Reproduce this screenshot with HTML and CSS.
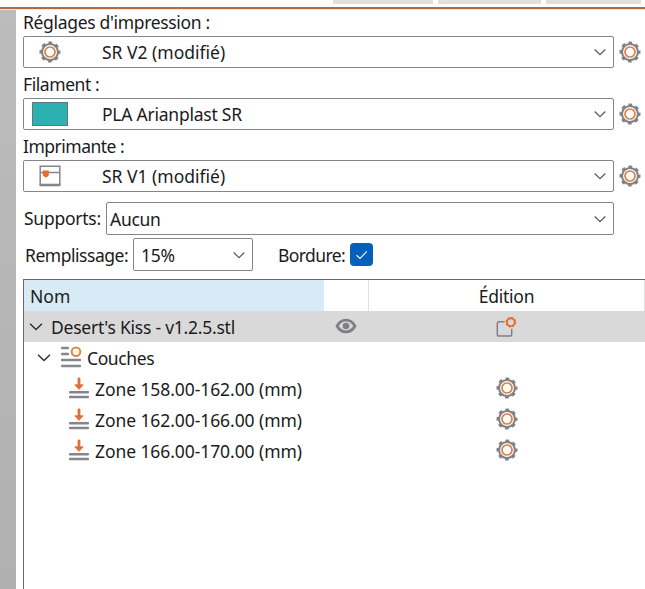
FILE: index.html
```html
<!DOCTYPE html>
<html lang="fr">
<head>
<meta charset="utf-8">
<title>Réglages</title>
<link rel="stylesheet" href="styles.css">
</head>
<body>
<svg class="defs" width="0" height="0">
  <symbol id="gear" viewBox="0 0 22 22">
    <circle cx="11" cy="11" r="9.2" fill="none" stroke="#808184" stroke-width="2.6" stroke-dasharray="3.6 3.626" stroke-dashoffset="1.8"/>
    <circle cx="11" cy="11" r="8" fill="#fffdf8" stroke="#808184" stroke-width="2.1"/>
    <circle cx="11" cy="11" r="5" fill="#fffefa" stroke="#dc7e4c" stroke-width="1.7"/>
  </symbol>
  <symbol id="chev" viewBox="0 0 12 8"><path d="M.7 1.5 6 6.7 11.3 1.5" fill="none" stroke="currentColor" stroke-width="1.2"/></symbol>
  <symbol id="zone" viewBox="0 0 22 22">
    <path d="M11 1.8V9" fill="none" stroke="#e07036" stroke-width="2.8" stroke-linecap="round"/>
    <path d="M6.8 7.8h8.4L11 12.4z" fill="#e07036" stroke="#e07036" stroke-width=".8" stroke-linejoin="round"/>
    <path d="M2.2 15.3h17.6M2.2 20h17.6" stroke="#86868a" stroke-width="2.6" stroke-linecap="round"/>
  </symbol>
</svg>
<header class="tabs"><i></i><i></i><i></i></header>
<div class="app">
  <div class="rail"></div>
  <main>
    <label class="title t1">Réglages d'impression :</label>
    <div class="line"><div class="combo"><span class="pic"><svg class="gear"><use href="#gear"/></svg></span><span class="v1">SR V2 (modifié)</span><svg class="chev"><use href="#chev"/></svg></div><svg class="gear"><use href="#gear"/></svg></div>
    <label class="title t2">Filament :</label>
    <div class="line"><div class="combo"><span class="pic"><b class="swatch"></b></span><span class="v2">PLA Arianplast SR</span><svg class="chev"><use href="#chev"/></svg></div><svg class="gear"><use href="#gear"/></svg></div>
    <label class="title t3">Imprimante :</label>
    <div class="line"><div class="combo"><span class="pic"><svg class="gear" viewBox="0 0 22 22"><path d="M1.2 20V1.2h19.6V20M1 7.5h20" fill="none" stroke="#85858a" stroke-width="1.5"/><path d="M.5 20h21" stroke="#85858a" stroke-width="2.6"/><path d="M3.8 5.5h6v4.8L8 12.2H6L3.8 10.3z" fill="#e56d2b"/></svg></span><span class="v1">SR V1 (modifié)</span><svg class="chev"><use href="#chev"/></svg></div><svg class="gear"><use href="#gear"/></svg></div>
    <div class="supports"><label class="t4">Supports:</label><div class="combo"><span class="v4">Aucun</span><svg class="chev"><use href="#chev"/></svg></div></div>
    <div class="fill"><label class="t5">Remplissage:</label><div class="combo"><span class="v5">15%</span><svg class="chev"><use href="#chev"/></svg></div><label class="t6">Bordure:</label><span class="check"><svg viewBox="0 0 23 23" width="23" height="23"><path d="M6.5 12.2 10 15.5 16.8 8.4" fill="none" stroke="#e8f3ff" stroke-width="1.2"/></svg></span></div>
    <section class="tree">
      <div class="row head"><div class="name"><span class="n0">Nom</span></div><div class="eye"></div><div class="edit"><span class="n1">Édition</span></div></div>
      <div class="row selected"><div class="name"><svg class="arrow"><use href="#chev"/></svg><span class="n2">Desert's Kiss - v1.2.5.stl</span></div><div class="eye"><svg width="22" height="16" viewBox="0 0 22 16"><path d="M2 8C6.2.2 15.8.2 20 8 15.8 15.8 6.2 15.8 2 8z" fill="none" stroke="#808083" stroke-width="2.8" stroke-linejoin="round"/><circle cx="11" cy="8" r="3.3" fill="#808083"/></svg></div><div class="edit"><svg class="gear" viewBox="0 0 22 22"><path d="M8.5 5.7H3.2Q1.3 5.7 1.3 7.6v10.6q0 1.9 1.9 1.9h10.6q1.9 0 1.9-1.9v-5.5" fill="none" stroke="#828286" stroke-width="1.5"/><circle cx="14.8" cy="6.2" r="4.7" fill="none" stroke="#e96b2c" stroke-width="1.3" stroke-dasharray="2 1.691"/><circle cx="14.8" cy="6.2" r="3.9" fill="none" stroke="#e96b2c" stroke-width="1.9"/></svg></div></div>
      <div class="row couches"><div class="name"><svg class="arrow"><use href="#chev"/></svg><svg class="gear" viewBox="0 0 22 22"><path d="M2.2 2h5.6M2.2 8h5.6M2.2 14h17.6M2.2 20h17.6" stroke="#86868d" stroke-width="2.6" stroke-linecap="round"/><circle cx="16" cy="5.8" r="4.3" fill="#fff9ed" stroke="#d78b42" stroke-width="2"/></svg><span class="n3">Couches</span></div></div>
      <div class="row zone"><div class="name"><svg class="gear"><use href="#zone"/></svg><span class="n4">Zone 158.00-162.00 (mm)</span></div><div class="eye"></div><div class="edit"><svg class="gear"><use href="#gear"/></svg></div></div>
      <div class="row zone"><div class="name"><svg class="gear"><use href="#zone"/></svg><span class="n4">Zone 162.00-166.00 (mm)</span></div><div class="eye"></div><div class="edit"><svg class="gear"><use href="#gear"/></svg></div></div>
      <div class="row zone"><div class="name"><svg class="gear"><use href="#zone"/></svg><span class="n4">Zone 166.00-170.00 (mm)</span></div><div class="eye"></div><div class="edit"><svg class="gear"><use href="#gear"/></svg></div></div>
    </section>
  </main>
</div>
</body>
</html>
```
FILE: styles.css
```css
* { box-sizing: border-box; }
body { margin: 0; height: 589px; overflow: hidden; background: #fff; color: #1b1b1b; font: 17.5px/24px "Noto Sans", "Open Sans", sans-serif; display: flex; flex-direction: column; }
.defs { display: none; }
svg { display: block; flex: none; }
span, label { white-space: nowrap; }
.tabs { height: 10px; flex: none; display: flex; gap: 5px; padding-left: 333px; border-bottom: 1px solid #fce5d5; background: linear-gradient(#fff 7px, #b36a42 7px); }
.tabs i { width: 100px; height: 4px; background: #e2dfdd; }
.tabs i:nth-child(2) { width: 103px; }
.tabs i:nth-child(3) { width: 95px; }
.app { flex: 1; display: flex; min-height: 0; }
.rail { width: 16px; background: linear-gradient(#bcbcbc, #b0b0b0); }
main { flex: 1; display: flex; flex-direction: column; padding-left: 7px; }
.title { height: 30px; padding-top: 4px; flex: none; }
.title.t1 { height: 26px; padding-top: 0; }
.line { display: flex; align-items: center; gap: 5px; height: 32px; flex: none; }
.combo { width: 591px; height: 32px; border: 1px solid #85858a; border-radius: 2px; display: flex; align-items: center; padding-right: 7px; color: #1b1b1b; }
.pic { width: 78px; padding-left: 15px; flex: none; }
.swatch { display: block; width: 36px; height: 24px; margin-left: -7px; background: #2cb1b0; border: 1px solid #60787b; }
.gear { width: 22px; height: 22px; }
.chev { width: 12px; height: 8px; color: #58585c; margin-left: auto; }
.supports { display: flex; align-items: center; margin-top: 10px; height: 33px; flex: none; }
.supports label { width: 83px; padding: 0 0 1px 1px; }
.supports .combo { width: 508px; height: 33px; padding-left: 3px; }
.fill { display: flex; align-items: center; margin-top: 3px; height: 33px; flex: none; }
.fill .t5 { width: 110px; padding-left: 2px; }
.fill .combo { width: 120px; height: 33px; padding-left: 7px; }
.t6 { width: 97px; padding-left: 25px; }
.check { width: 23px; height: 23px; border-radius: 4px; background: #0460b8; }

/* Text metrics */
.t1 { letter-spacing: -.33px; }
.t2 { letter-spacing: -.43px; }
.t3 { letter-spacing: -.5px; }
.t4 { letter-spacing: -.25px; }
.t5 { letter-spacing: -.47px; }
.t6 { letter-spacing: -.6px; }
.v2 { letter-spacing: -.24px; }
.v4, .v5 { letter-spacing: -.3px; }
.n1 { letter-spacing: -.23px; }
.n2 { letter-spacing: -.24px; }
.n3 { letter-spacing: -.4px; }
.n4 { letter-spacing: -.08px; }

.tree { margin-top: 8px; flex: 1; border: solid #66686d; border-width: 1px 0 0 1px; }
.row { height: 31px; display: flex; }
.name { width: 300px; display: flex; align-items: center; }
.eye { width: 45px; display: flex; align-items: center; justify-content: center; padding: 0 2px 2px 0; }
.edit { flex: 1; display: flex; align-items: center; justify-content: center; }
.head .name { background: #d9eaf7; padding: 0 0 0 6px; }
.head .eye { border-right: 1px solid #e0e0e0; }
.head .edit { border-right: 1px solid #e0e0e0; }
.selected { background: #d9d9d9; }
.arrow { width: 14px; height: 9px; color: #2b2b2b; margin: 0 8px 1px 5px; }
.couches .arrow { margin-left: 13px; margin-right: 9px; }
.couches .gear { margin: 0 5px 2px 0; }
.zone .name { padding-left: 44px; gap: 5px; }
.zone .gear { margin-bottom: 2px; }
```
